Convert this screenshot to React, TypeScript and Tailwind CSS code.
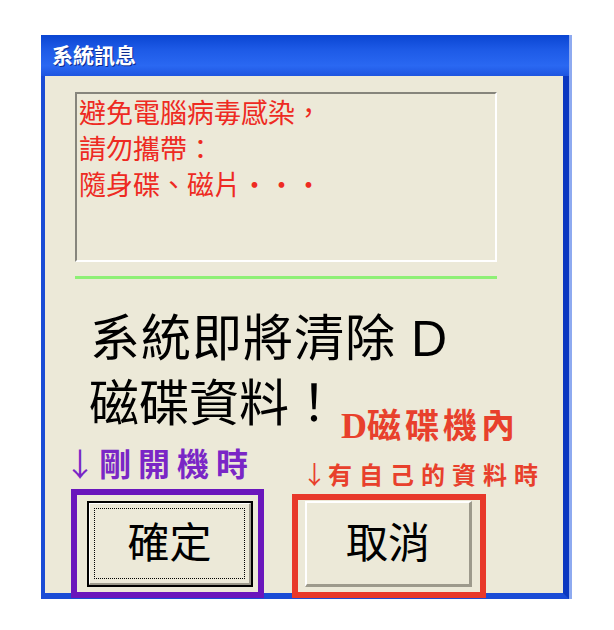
export default function App() {
  return (
    <div className="relative h-[630px] w-[614px] bg-white pl-[41px] pt-[35px] font-['Liberation_Sans','Noto_Sans_CJK_TC',sans-serif]">
      {/* XP style dialog */}
      <div className="w-[528px] shadow-[3px_0_0_#8eaaf0]">
        <div className="flex h-[41px] items-center bg-[linear-gradient(to_bottom,#0a45d2_0%,#1d5ae6_35%,#2a68f2_75%,#1e55e0_100%)] pl-[11px]">
          <span className="text-[21px] font-bold leading-none text-white [text-shadow:1px_1px_0_#0a2a90]">
            系統訊息
          </span>
        </div>
        <div className="h-[523px] border-b-[6px] border-l-4 border-r-[6px] border-[#1a4cd6] border-r-[#0b38c0] bg-[#ece9d8] pt-4">
          <div className="ml-[30px] h-[170px] w-[422px] border-2 border-[#86857c] border-b-white border-r-white px-[2px] pt-[2px] text-[27px] leading-[36px] text-[#ee2a22]">
            <p>避免電腦病毒感染，</p>
            <p>請勿攜帶：</p>
            <p>隨身碟、磁片・・・</p>
          </div>
          <div className="ml-[30px] mt-[14px] h-[3px] w-[422px] bg-[#8ef076]" />
          <div className="ml-[45px] mt-[28px] text-[50px] leading-[65px] text-black">
            <p className="tracking-[1px]">系統即將清除 D</p>
            <p className="-ml-px">磁碟資料！</p>
          </div>
          <div className="mt-[64px] flex gap-[52px] pl-[42px]">
            <button
              type="button"
              className="h-[86px] w-[166px] border-2 border-black bg-[#ece9d8]"
            >
              <div className="flex h-full w-full border border-white border-b-2 border-r-2 border-b-[#9d9a8c] border-r-[#9d9a8c] p-[4px]">
                <div className="flex flex-1 items-center justify-center border border-dotted border-black text-[42px] leading-none text-black">
                  確定
                </div>
              </div>
            </button>
            <button
              type="button"
              className="flex h-[86px] w-[167px] items-center justify-center border-l-2 border-t-2 border-white border-b-[3px] border-r-[3px] border-b-[#9d9a8c] border-r-[#9d9a8c] bg-[#ece9d8] text-[42px] leading-none text-black"
            >
              取消
            </button>
          </div>
        </div>
      </div>

      {/* annotations drawn over the dialog */}
      <div className="absolute left-[341px] top-[407px] flex items-baseline font-bold leading-none text-[#e8402c]">
        <span className="font-['Liberation_Serif',serif] text-[36px]">D</span>
        <span className="font-['Noto_Sans_CJK_TC',sans-serif] text-[34px] tracking-[4px]">磁碟機內</span>
      </div>
      <div className="absolute left-[64px] top-[446px] flex items-center font-['Noto_Sans_CJK_TC',sans-serif] font-bold leading-none text-[#7a26c6]">
        <span className="mr-[3px] text-[32px] font-normal">↓</span>
        <span className="text-[32px] tracking-[7px]">剛開機時</span>
      </div>
      <div className="absolute left-[302px] top-[461px] flex items-center font-['Noto_Sans_CJK_TC',sans-serif] font-bold leading-none text-[#e8402c]">
        <span className="mr-[1px] text-[25px] font-normal">↓</span>
        <span className="text-[24px] tracking-[7px]">有自己的資料時</span>
      </div>
      <div className="absolute left-[71px] top-[489px] h-[109px] w-[193px] border-[6px] border-[#6a16bc]" />
      <div className="absolute left-[292px] top-[494px] h-[104px] w-[194px] border-[6px] border-[#e8382a]" />
    </div>
  );
}
